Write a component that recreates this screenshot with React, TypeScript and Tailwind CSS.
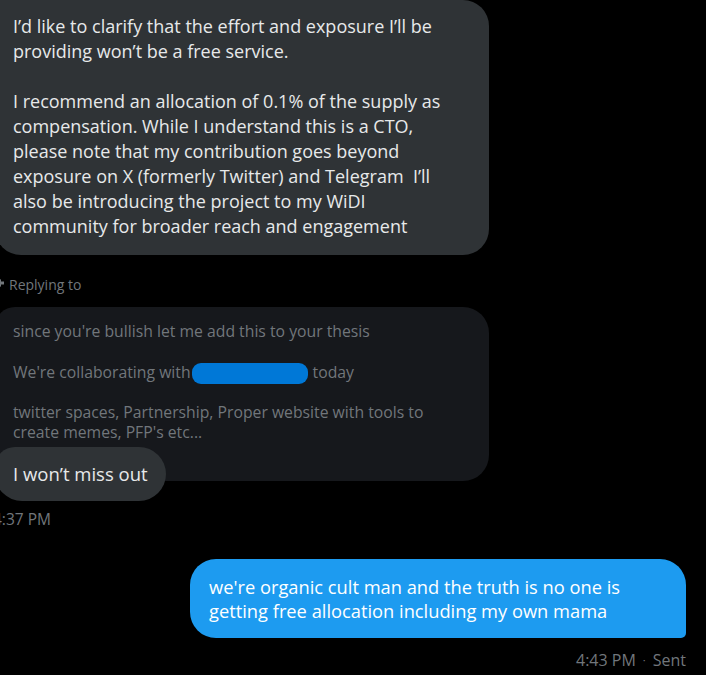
import React from "react";

const font = { fontFamily: '"Open Sans", "Noto Sans", sans-serif' };

export default function App() {
  return (
    <div className="w-[706px] h-[675px] bg-black overflow-hidden relative" style={font}>
      <div className="flex flex-col -ml-[5px]">
        {/* first received bubble */}
        <div className="w-[494px] bg-[#2f3336] rounded-[26px] rounded-tl-none pt-[14px] pb-[16px] pl-[18px] text-[#e7e9ea] text-[18px] leading-[25px] tracking-[0px]">
          <div className="whitespace-nowrap">I’d like to clarify that the effort and exposure I’ll be</div>
          <div className="whitespace-nowrap">providing won’t be a free service.</div>
          <div className="h-[25px]" />
          <div className="whitespace-nowrap">I recommend an allocation of 0.1% of the supply as</div>
          <div className="whitespace-nowrap">compensation. While I understand this is a CTO,</div>
          <div className="whitespace-nowrap">please note that my contribution goes beyond</div>
          <div className="whitespace-nowrap">exposure on X (formerly Twitter) and Telegram&nbsp; I’ll</div>
          <div className="whitespace-nowrap">also be introducing the project to my WiDI</div>
          <div className="whitespace-nowrap">community for broader reach and engagement</div>
        </div>

        {/* replying to */}
        <div className="mt-[19px] h-[20px] flex items-center gap-[4px] text-[#71767b] text-[14px]">
          <svg width="10" height="10" viewBox="0 0 10 10" className="mt-[-3px]">
            <path d="M1 5 L6 1 L6 3.5 L9 3.5 L9 6.5 L6 6.5 L6 9 Z" fill="#71767b" />
          </svg>
          <span>Replying to</span>
        </div>

        {/* quoted message */}
        <div className="mt-[13px] w-[494px] h-[174px] bg-[#16181c] rounded-[26px] rounded-tl-[20px] pt-[14px] pl-[18px] text-[#71767b] text-[15.75px] leading-[20px]">
          <div className="whitespace-nowrap">since you're bullish let me add this to your thesis</div>
          <div className="h-[20px]" />
          <div className="whitespace-nowrap flex items-center">
            <span>We're collaborating with</span>
            <span className="inline-block w-[116px] h-[21px] bg-[#0078d7] rounded-[9px] ml-[1px] mr-[5px] translate-y-[2px]" />
            <span>today</span>
          </div>
          <div className="h-[20px]" />
          <div className="whitespace-nowrap">twitter spaces, Partnership, Proper website with tools to</div>
          <div className="whitespace-nowrap">create memes, PFP's etc...</div>
        </div>

        {/* I won't miss out */}
        <div className="-mt-[34px] w-[171px] h-[54px] bg-[#2f3336] rounded-[27px] rounded-tl-[20px] flex items-center pl-[18px] text-[#e7e9ea] text-[18.5px]">
          I won’t miss out
        </div>

        <div className="mt-[8px] -ml-[2px] text-[#71767b] text-[15.5px] leading-[20px]">4:37 PM</div>
      </div>

      {/* sent message */}
      <div className="flex flex-col items-end pr-[20px] mt-[30px]">
        <div className="w-[496px] bg-[#1d9bf0] rounded-[26px] rounded-br-[5px] pt-[16px] pb-[15px] pl-[19px] text-white text-[18.3px] leading-[24px]">
          <div className="whitespace-nowrap">we're organic cult man and the truth is no one is</div>
          <div className="whitespace-nowrap">getting free allocation including my own mama</div>
        </div>
        <div className="mt-[12px] text-[#71767b] text-[16px] leading-[20px] flex items-center gap-[7px]">
          <span>4:43 PM</span>
          <span className="text-[11px]">·</span>
          <span>Sent</span>
        </div>
      </div>
    </div>
  );
}
